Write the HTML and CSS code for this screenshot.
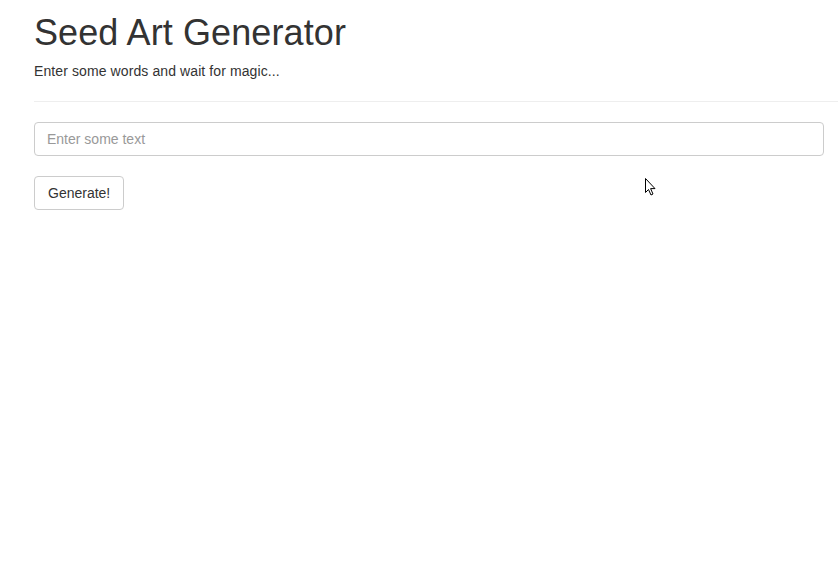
FILE: index.html
```html
<!DOCTYPE html>
<html>
<head>
<meta charset="utf-8">
<link rel="stylesheet" href="styles.css">
</head>
<body>
<div class="page">
  <header class="page-header">
    <h1 class="title">Seed Art Generator</h1>
    <p class="lead">Enter some words and wait for magic...</p>
  </header>
  <form class="form">
    <input class="text-input" type="text" placeholder="Enter some text">
    <div class="actions">
      <button class="btn" type="button">Generate!</button>
    </div>
  </form>
</div>
<svg class="cursor" width="14" height="20" viewBox="0 0 14 20">
  <path d="M1.5 1.5 L1.5 15.5 L4.5 12.5 L7 18 L9 17 L6.6 11.6 L11 11.6 Z" fill="#fff" stroke="#000" stroke-width="1" stroke-linejoin="miter"/>
</svg>
</body>
</html>
```
FILE: styles.css
```css
html, body {
  margin: 0;
  padding: 0;
  background: #fff;
}
body {
  font-family: "Liberation Sans", Arial, sans-serif;
  font-size: 14px;
  line-height: 1.42857;
  color: #333;
  position: relative;
  min-height: 567px;
}
.page {
  padding-left: 34px;
}
.page-header {
  border-bottom: 1px solid #eee;
  padding-bottom: 19px;
}
.title {
  margin: 0;
  padding-top: 13px;
  font-size: 36px;
  font-weight: 400;
  line-height: 1.1;
  color: #333;
  letter-spacing: 0.1px;
}
.lead {
  margin: 9px 0 0;
  font-size: 14px;
  color: #333;
  letter-spacing: 0.1px;
}
.form {
  padding-top: 20px;
  padding-right: 14px;
}
.text-input {
  display: block;
  box-sizing: border-box;
  width: 100%;
  height: 34px;
  padding: 6px 12px;
  font-family: "Liberation Sans", Arial, sans-serif;
  font-size: 14px;
  color: #555;
  background: #fff;
  border: 1px solid #ccc;
  border-radius: 4px;
  outline: none;
}
.text-input::placeholder {
  color: #999;
}
.actions {
  padding-top: 20px;
}
.btn {
  box-sizing: border-box;
  height: 34px;
  padding: 6px 13px;
  font-family: "Liberation Sans", Arial, sans-serif;
  font-size: 14px;
  color: #333;
  background: #fff;
  border: 1px solid #ccc;
  border-radius: 4px;
}
.cursor {
  position: absolute;
  left: 644px;
  top: 177px;
}
```
